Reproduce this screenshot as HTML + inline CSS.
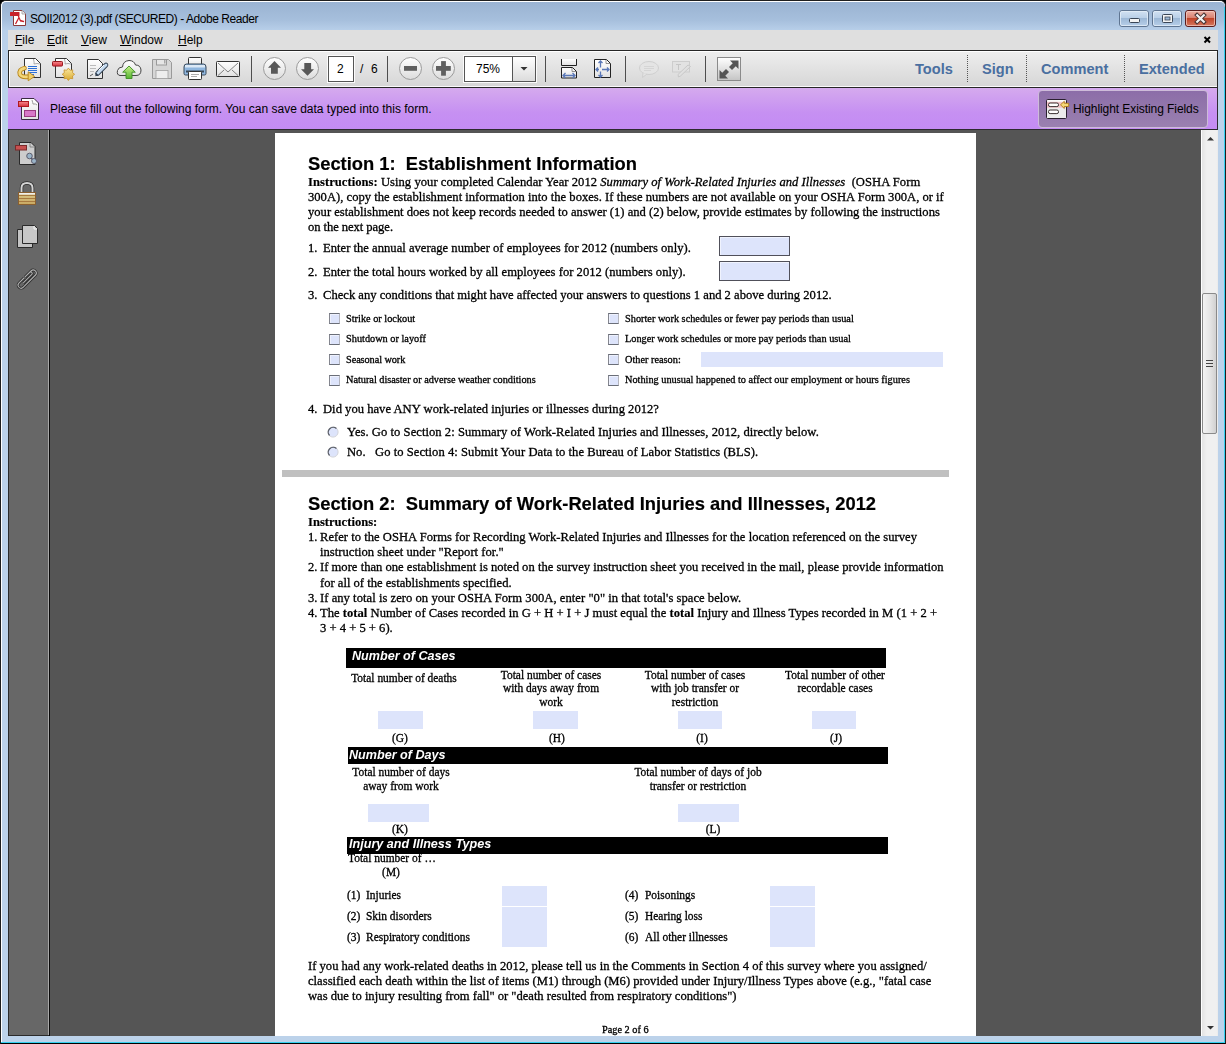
<!DOCTYPE html>
<html><head><meta charset="utf-8">
<style>
*{margin:0;padding:0;box-sizing:border-box}
html,body{width:1226px;height:1044px;overflow:hidden;background:#000}
body{position:relative;font-family:"Liberation Sans",sans-serif}
.a{position:absolute}
.u{position:absolute;white-space:pre;line-height:20px;font-size:12px;color:#000}
.u u{text-decoration:underline;text-underline-offset:1px}
.t{position:absolute;white-space:pre;line-height:20px;color:#000;-webkit-text-stroke:0.3px currentColor;will-change:transform}
.t b{-webkit-text-stroke:0.15px currentColor}
#frame{left:0;top:0;width:1226px;height:1044px;background:#bcd2ea;border:1px solid #1e1e1e;border-bottom-color:#000;border-radius:6px 6px 0 0}
#frameIn{left:1px;top:1px;width:1224px;height:1041px;border-left:1px solid #fff;border-top:1px solid #fff;border-radius:5px 5px 0 0;background:linear-gradient(#9ab3d2 0px,#a6bfdc 18px,#b9d0ea 29px,#bcd2ea 60px)}
#cyanB{left:1px;top:1042px;width:1224px;height:1px;background:#35d0f0}
#cyanR{left:1224px;top:7px;width:1px;height:1036px;background:#35d0f0}
#menubar{left:8px;top:30px;width:1210px;height:20px;background:#dfdfdf}
#toolbar{left:8px;top:50px;width:1210px;height:38px;background:linear-gradient(#eeeeee,#d6d6d6);border:1px solid #262626}
#toolbarIn{left:0;top:0;width:1208px;height:36px;border-top:1px solid #fff;border-bottom:1px solid #fafafa;border-left:1px solid #fff}
#purple{left:8px;top:88px;width:1210px;height:42px;background:linear-gradient(#d5aaee,#c690f2 60%,#c48cf4);border-bottom:1px solid #2d2a30;border-right:1px solid #2d2a30}
#leftpanel{left:8px;top:130px;width:42px;height:906px;background:#676767;border-left:1px solid #2b2b2b;border-bottom:1px solid #2b2b2b}
#lp1{left:48px;top:130px;width:1px;height:905px;background:#a8a8a8}
#lp2{left:49px;top:130px;width:1px;height:906px;background:#0a0a0a}
#docarea{left:50px;top:130px;width:1152px;height:906px;background:#555}
#scroll{left:1201px;top:130px;width:17px;height:906px;background:linear-gradient(90deg,#e4e4e4,#f0f0f0 30%,#f0f0f0 90%,#eaeaea);border-left:1px solid #fff}
#page{left:275px;top:133px;width:701px;height:903px;background:#fff}
.sep{position:absolute;top:56px;width:1px;height:26px;background:#4e4e4e}
.tb{position:absolute;font-weight:bold;font-size:14.6px;line-height:20px;color:#4a6fa0;top:58.7px;white-space:pre}
.dsep{position:absolute;top:55px;height:27px;width:1px;background:repeating-linear-gradient(#555 0 1px,transparent 1px 2px)}
</style></head><body>
<div id="frame" class="a"></div>
<div id="frameIn" class="a"></div>
<div id="cyanB" class="a"></div>
<div id="cyanR" class="a"></div>
<div id="menubar" class="a"></div>
<div id="toolbar" class="a"><div id="toolbarIn" class="a"></div></div>
<div class="sep" style="left:251px"></div>
<div class="sep" style="left:387px"></div>
<div class="sep" style="left:545px"></div>
<div class="sep" style="left:625px"></div>
<div class="sep" style="left:705px"></div>
<div class="dsep" style="left:967px"></div>
<div class="dsep" style="left:1026px"></div>
<div class="dsep" style="left:1124px"></div>
<div id="purple" class="a"></div>
<div class="a" style="left:1038px;top:90px;width:170px;height:38px;border-radius:4px;background:linear-gradient(#8c6ea8,#9a80b0);border:1px solid #cdbbd9"></div>
<div id="docarea" class="a"></div>
<div id="leftpanel" class="a"></div>
<div id="lp1" class="a"></div>
<div id="lp2" class="a"></div>
<div id="scroll" class="a"></div>
<svg class="a" style="left:0;top:0" width="1226" height="1044" viewBox="0 0 1226 1044">
<defs>
 <linearGradient id="gDoc" x1="0" y1="0" x2="0" y2="1"><stop offset="0" stop-color="#ffffff"/><stop offset="1" stop-color="#e2e2e2"/></linearGradient>
 <linearGradient id="gGold" x1="0" y1="0" x2="0" y2="1"><stop offset="0" stop-color="#fbe9a0"/><stop offset="1" stop-color="#d9a92e"/></linearGradient>
 <linearGradient id="gCirc" x1="0" y1="0" x2="0" y2="1"><stop offset="0" stop-color="#ffffff"/><stop offset="1" stop-color="#dcdcdc"/></linearGradient>
 <linearGradient id="gGreen" x1="0" y1="0" x2="0" y2="1"><stop offset="0" stop-color="#c7f08a"/><stop offset="1" stop-color="#56b431"/></linearGradient>
 <linearGradient id="gRed" x1="0" y1="0" x2="0" y2="1"><stop offset="0" stop-color="#f58a8f"/><stop offset="1" stop-color="#d7313a"/></linearGradient>
 <linearGradient id="gBlueBtn" x1="0" y1="0" x2="0" y2="1"><stop offset="0" stop-color="#d3e2f2"/><stop offset="0.45" stop-color="#bad0e8"/><stop offset="0.5" stop-color="#9db8d6"/><stop offset="1" stop-color="#b8d0ea"/></linearGradient>
 <linearGradient id="gCloseBtn" x1="0" y1="0" x2="0" y2="1"><stop offset="0" stop-color="#eeb3a8"/><stop offset="0.45" stop-color="#d98272"/><stop offset="0.5" stop-color="#c0442a"/><stop offset="1" stop-color="#d77b62"/></linearGradient>
 <linearGradient id="gFS" x1="0" y1="0" x2="0" y2="1"><stop offset="0" stop-color="#ffffff"/><stop offset="1" stop-color="#c4c4c4"/></linearGradient>
 <linearGradient id="gThumb" x1="0" y1="0" x2="1" y2="0"><stop offset="0" stop-color="#f4f4f4"/><stop offset="0.5" stop-color="#e6e6e6"/><stop offset="1" stop-color="#cfcfcf"/></linearGradient>
 <linearGradient id="gLock" x1="0" y1="0" x2="0" y2="1"><stop offset="0" stop-color="#d9c88a"/><stop offset="1" stop-color="#c9a862"/></linearGradient>
</defs>
<!-- title icon -->
<path d="M13.5 10.5 H22 L25.5 14 V25.5 H13.5 Z" fill="#fff" stroke="#8a3a3a" stroke-width="1"/>
<path d="M22 10.5 V14 H25.5" fill="#eee" stroke="#999" stroke-width="0.8"/>
<rect x="10" y="12" width="9.5" height="4" fill="#c8202a" rx="0.5"/>
<path d="M15.5 24 L19 17.5 L20.5 21 L24 21.5 L19.5 20 M19 17.5 L18 15" fill="none" stroke="#c8202a" stroke-width="1.3"/>
<!-- window buttons -->
<rect x="1119.5" y="10.5" width="29" height="16" rx="2.5" fill="url(#gBlueBtn)" stroke="#5f7591" stroke-width="1"/>
<rect x="1120.5" y="11.5" width="27" height="14" rx="1.5" fill="none" stroke="#e4eef8" stroke-opacity="0.8" stroke-width="1"/>
<rect x="1129.5" y="18.5" width="10" height="4" rx="1" fill="#f4f4f4" stroke="#3a4656" stroke-width="1"/>
<rect x="1152.5" y="10.5" width="29" height="16" rx="2.5" fill="url(#gBlueBtn)" stroke="#5f7591" stroke-width="1"/>
<rect x="1153.5" y="11.5" width="27" height="14" rx="1.5" fill="none" stroke="#e4eef8" stroke-opacity="0.8" stroke-width="1"/>
<rect x="1162.5" y="14.5" width="10" height="8" rx="1" fill="#f4f4f4" stroke="#3a4656" stroke-width="1"/>
<rect x="1165" y="17" width="5" height="3" fill="#9db8d6" stroke="#3a4656" stroke-width="0.8"/>
<rect x="1185.5" y="10.5" width="30" height="16" rx="2.5" fill="url(#gCloseBtn)" stroke="#5a1c1c" stroke-width="1"/>
<rect x="1186.5" y="11.5" width="28" height="14" rx="1.5" fill="none" stroke="#f6d0c8" stroke-opacity="0.7" stroke-width="1"/>
<path d="M1197 15 L1204 22 M1204 15 L1197 22" stroke="#4a3434" stroke-width="4" stroke-linecap="square"/>
<path d="M1197.2 15.2 L1203.8 21.8 M1203.8 15.2 L1197.2 21.8" stroke="#f2f2f2" stroke-width="2.2" stroke-linecap="square"/>
<!-- menu close -->
<path d="M1204.5 37 L1210 42.5 M1210 37 L1204.5 42.5" stroke="#000" stroke-width="2"/>
<!-- toolbar icon 1: create -->
<path d="M24.5 58.5 H35.5 L40.5 63.5 V77.5 H24.5 Z" fill="url(#gDoc)" stroke="#333" stroke-width="1"/>
<path d="M33.5 59 Q34.5 63 34 64 Q37 63 40 64" fill="none" stroke="#999" stroke-width="0.8"/>
<g stroke="#2a6fd6" stroke-width="1"><path d="M28 66.5 H37"/><path d="M28 68.5 H37"/><path d="M28 70.5 H37"/><path d="M28 72.5 H37"/><path d="M30 74.5 H34"/></g>
<path d="M24.5 68.2 Q18.5 69.5 20 74.5 Q21.5 77.6 29 76.6" fill="none" stroke="#b8861c" stroke-width="4.6" stroke-linecap="round"/>
<path d="M24.5 68.2 Q18.5 69.5 20 74.5 Q21.5 77.6 29 76.6" fill="none" stroke="#f3d77a" stroke-width="2.8" stroke-linecap="round"/>
<path d="M28.2 71.8 L34.6 76.4 L28.2 80.8 Z" fill="#f0cf6a" stroke="#b8861c" stroke-width="0.9" stroke-linejoin="round"/>
<!-- toolbar icon 2: forms -->
<path d="M55.5 58.5 H66.5 L71.5 63.5 V77.5 H55.5 Z" fill="url(#gDoc)" stroke="#333" stroke-width="1"/>
<path d="M64.5 59 Q65.5 63 65 64 Q68 63 71 64" fill="none" stroke="#999" stroke-width="0.8"/>
<rect x="52.5" y="61.5" width="10" height="4.6" rx="0.8" fill="url(#gRed)" stroke="#9a1a20" stroke-width="1"/>
<path d="M68.40 68.10 L70.08 70.23 L72.78 69.92 L72.47 72.62 L74.60 74.30 L72.47 75.98 L72.78 78.68 L70.08 78.37 L68.40 80.50 L66.72 78.37 L64.02 78.68 L64.33 75.98 L62.20 74.30 L64.33 72.62 L64.02 69.92 L66.72 70.23 Z" fill="url(#gGold)" stroke="#c8932a" stroke-width="0.8" stroke-linejoin="round"/>
<!-- icon 3: sign doc -->
<path d="M87.5 59.5 H98.5 L102.5 63.5 V78.5 H87.5 Z" fill="url(#gDoc)" stroke="#333" stroke-width="1"/>
<g stroke="#bbb" stroke-width="1"><path d="M90 65.5 H96"/><path d="M90 68.5 H96"/><path d="M90 71.5 H94"/></g>
<path d="M90 76 L93 74" stroke="#333" stroke-width="0.8"/>
<path d="M97.5 73.5 L106 65" stroke="#2e3e50" stroke-width="4.6" stroke-linecap="round"/>
<path d="M97.5 73.5 L106 65" stroke="#c4daf0" stroke-width="2.8" stroke-linecap="round"/>
<path d="M98.5 70.5 L104 65" stroke="#fff" stroke-width="1"/>
<path d="M95.2 76.2 L96.2 72.8 L98.6 75.2 Z" fill="#2e3e50"/>
<!-- icon 4: cloud -->
<path d="M120 75.5 Q116.5 75 117.5 70.5 Q118.5 67 122.5 67 Q123 61 129 60.5 Q134 60.5 135.5 65 Q140.5 65 141 70 Q141 75.5 136 75.5 Z" fill="url(#gDoc)" stroke="#444" stroke-width="1"/>
<path d="M129 66 L135.3 72.2 H132 V78.5 H126 V72.2 H122.7 Z" fill="url(#gGreen)" stroke="#3d8f24" stroke-width="0.9"/>
<!-- icon 5: save disabled -->
<path d="M152.5 59.5 H168.5 L171.5 62.5 V78.5 H152.5 Z" fill="#d6d6d6" stroke="#9a9a9a" stroke-width="1"/>
<rect x="156.5" y="59.5" width="10" height="5.5" fill="#e6e6e6" stroke="#9a9a9a" stroke-width="1"/>
<rect x="164" y="60" width="1.5" height="3.5" fill="#a8a8a8"/>
<rect x="156" y="70.5" width="12" height="8" fill="#ededed" stroke="#a0a0a0" stroke-width="0.8"/>
<!-- icon 6: printer -->
<rect x="188.5" y="57.5" width="13" height="9" rx="1" fill="url(#gDoc)" stroke="#333" stroke-width="1"/>
<path d="M186.5 64 H203.5 Q206 64 206 67 V73.5 Q206 75 204.5 75 H185.5 Q184 75 184 73.5 V67 Q184 64 186.5 64 Z" fill="#8fb6de" stroke="#3a4a5a" stroke-width="1"/>
<rect x="185" y="65" width="20" height="2.5" fill="#dbe8f5"/>
<rect x="186" y="70.5" width="18" height="2" fill="#38495a"/>
<rect x="188.5" y="71.5" width="13" height="8" rx="0.8" fill="#fff" stroke="#333" stroke-width="1"/>
<g stroke="#999" stroke-width="0.8"><path d="M191 74.5 H199"/><path d="M191 76.5 H197"/></g>
<!-- icon 7: envelope -->
<rect x="216.5" y="61.5" width="23" height="15" rx="0.8" fill="url(#gDoc)" stroke="#333" stroke-width="1"/>
<path d="M218 63 L228 72 L238 63 M218 75.5 L224 70 M238 75.5 L232 70" fill="none" stroke="#666" stroke-width="0.8"/>
<!-- nav circles -->
<circle cx="274.5" cy="68.5" r="11" fill="url(#gCirc)" stroke="#9a9a9a" stroke-width="1"/>
<path d="M274.5 61 L281 67.8 H277.8 V73.8 H271 V67.8 H268 Z" fill="#585858"/>
<circle cx="307.5" cy="68.5" r="11" fill="url(#gCirc)" stroke="#9a9a9a" stroke-width="1"/>
<path d="M304.3 63 H311.1 V69.2 H314 L307.5 75.8 L301 69.2 H304.3 Z" fill="#585858"/>
<!-- page box -->
<rect x="327.5" y="55.5" width="27" height="27" fill="#fff" stroke="#fbfbfb" stroke-width="1"/>
<rect x="328.5" y="56.5" width="25" height="25" fill="#fff" stroke="#555" stroke-width="1"/>
<!-- zoom circles -->
<circle cx="410.5" cy="68.5" r="11" fill="url(#gCirc)" stroke="#9a9a9a" stroke-width="1"/>
<rect x="404" y="66" width="13" height="4.8" fill="#606060"/>
<circle cx="443.5" cy="68.5" r="11" fill="url(#gCirc)" stroke="#9a9a9a" stroke-width="1"/>
<rect x="436" y="66" width="14.8" height="4.8" fill="#606060"/>
<rect x="441.1" y="61.1" width="4.8" height="14.6" fill="#606060"/>
<!-- zoom box -->
<rect x="463.5" y="55.5" width="73" height="27" fill="none" stroke="#fbfbfb" stroke-width="1"/>
<rect x="464.5" y="56.5" width="71" height="25" fill="#fff" stroke="#555" stroke-width="1"/>
<rect x="513" y="57" width="22" height="24" fill="url(#gCirc)"/>
<path d="M512.5 57 V81" stroke="#555" stroke-width="1"/>
<path d="M520.5 67 H527.5 L524 70.5 Z" fill="#333"/>
<!-- fit width -->
<path d="M561.5 59 V65.5 H576.5 V59" fill="url(#gDoc)" stroke="#222" stroke-width="1"/>
<path d="M561.5 67.5 H572.5 L576.5 71.5 V78 H561.5 Z" fill="url(#gDoc)" stroke="#222" stroke-width="1"/>
<path d="M572 68 V71.5 H576" fill="none" stroke="#777" stroke-width="0.8"/>
<path d="M563 75.5 H575 M565.5 73 L563 75.5 L565.5 78 M572.5 73 L575 75.5 L572.5 78" fill="none" stroke="#5a78b8" stroke-width="1.3"/>
<!-- fit page -->
<path d="M594.5 59.5 H606.5 L610.5 63.5 V77.5 H594.5 Z" fill="url(#gDoc)" stroke="#222" stroke-width="1"/>
<path d="M606 60 V63.5 H610" fill="none" stroke="#777" stroke-width="0.8"/>
<path d="M600.5 61 V67.5 M600.5 71.5 V77 M596 69.5 H599 M602 69.5 H609 M598.5 63 L600.5 61 L602.5 63 M598.5 75 L600.5 77 L602.5 75 M598 67.5 L596 69.5 L598 71.5 M607 67.5 L609 69.5 L607 71.5" fill="none" stroke="#5a78b8" stroke-width="1.3"/>
<!-- comment disabled -->
<ellipse cx="649" cy="68" rx="9.5" ry="6.5" fill="#e4e4e4" stroke="#cfcfcf" stroke-width="1"/>
<path d="M643 73 L642.5 77.5 L647 74" fill="#e4e4e4" stroke="#cfcfcf" stroke-width="1"/>
<g stroke="#d0d0d0" stroke-width="0.8"><path d="M644 66.5 H654"/><path d="M644 68.5 H654"/><path d="M644 70.5 H651"/></g>
<!-- text edit disabled -->
<rect x="672.5" y="61.5" width="17" height="10.5" fill="#e2e2e2" stroke="#cdcdcd" stroke-width="1"/>
<path d="M676 64.5 H681 M678.5 64.5 V70" stroke="#c6c6c6" stroke-width="1"/>
<path d="M678.5 77 L678 74.5 L688 65 L690.5 66.5 L680.5 76 Z" fill="#e0e0e0" stroke="#c8c8c8" stroke-width="1"/>
<!-- fullscreen -->
<rect x="717.5" y="57.5" width="23" height="23" fill="url(#gFS)" stroke="#8a8a8a" stroke-width="1"/>
<path d="M738.5 60.5 H730 L738.5 69 Z" fill="#555"/><path d="M735 64 L730.5 68.5" stroke="#555" stroke-width="4.2"/>
<path d="M719.5 78.5 H728 L719.5 70 Z" fill="#555"/><path d="M723 75 L727.5 70.5" stroke="#555" stroke-width="4.2"/>
<!-- purple bar icon -->
<path d="M21.5 98.5 H34 L38.5 103 V119.5 H21.5 Z" fill="url(#gDoc)" stroke="#3a2a40" stroke-width="1" stroke-linejoin="round"/>
<path d="M32 100 Q33 103.5 33 104 Q36 103.5 37 105" fill="none" stroke="#888" stroke-width="0.8"/>
<rect x="18.5" y="101.5" width="10" height="5" fill="url(#gRed)" stroke="#b01820" stroke-width="1"/>
<rect x="24.5" y="110.5" width="11" height="6" fill="#d878c8" stroke="#9a3a80" stroke-width="1"/>
<!-- highlight button icon -->
<rect x="1046.5" y="99.5" width="20" height="19" rx="1.2" fill="#fafafa" stroke="#2a2030" stroke-width="1"/>
<rect x="1047" y="101.8" width="19" height="6" fill="#f2c4c8"/>
<rect x="1047" y="108" width="19" height="10" fill="#ececec"/>
<rect x="1048.5" y="103" width="10" height="3.6" rx="1.6" fill="#fff" stroke="#3a3030" stroke-width="1"/>
<rect x="1048.5" y="110" width="10" height="3.6" rx="1.6" fill="#fff" stroke="#3a3030" stroke-width="1"/>
<path d="M1060.5 104.8 L1064.3 101.3 V103.3 H1068.7 V106.5 H1064.3 V108.5 Z" fill="#f6d878" stroke="#b07a18" stroke-width="0.9" stroke-linejoin="round"/>
<!-- left nav icons -->
<path d="M19.5 142.5 H31 L35 146.5 V164.5 H19.5 Z" fill="#cdcdcd" stroke="#2a2a2a" stroke-width="1"/>
<path d="M30 143 V147 H34.5" fill="none" stroke="#777" stroke-width="0.8"/>
<rect x="15.5" y="145.5" width="11" height="4.5" fill="#c85050" stroke="#7a2a2a" stroke-width="1"/>
<circle cx="29.5" cy="156" r="2.8" fill="#9ab4c8" stroke="#556" stroke-width="0.9"/>
<path d="M31 158 L33.5 160.5" stroke="#556" stroke-width="1.6"/>
<circle cx="34" cy="161" r="2.5" fill="#9ab4c8" stroke="#556" stroke-width="0.9"/>
<path d="M21.5 192.5 V188 Q21.5 183 27 183 Q32.5 183 32.5 188 V192.5" fill="none" stroke="#2a2a2a" stroke-width="3.4"/>
<path d="M21.5 192.5 V188 Q21.5 183 27 183 Q32.5 183 32.5 188 V192.5" fill="none" stroke="#d4d4d4" stroke-width="2"/>
<rect x="18.5" y="192.5" width="17" height="12" fill="url(#gLock)" stroke="#8a6030" stroke-width="1"/>
<g stroke="#a87a40" stroke-width="1"><path d="M19 195.5 H35"/><path d="M19 198.5 H35"/><path d="M19 201.5 H35"/></g>
<rect x="19" y="193" width="16" height="1.5" fill="#eee"/>
<path d="M17.5 229.5 H32.5 V247.5 H17.5 Z" fill="#c4c4c4" stroke="#2a2a2a" stroke-width="1"/>
<path d="M22.5 225.5 H34.5 L37.5 228.5 V243.5 H22.5 Z" fill="#c8c8c8" stroke="#2a2a2a" stroke-width="1"/>
<path d="M34 226 V229 H37" fill="none" stroke="#fff" stroke-width="0.8"/>
<g transform="translate(27.2 279.1) rotate(-45) scale(1.1 1.2)" fill="none">
<path d="M-1 -2.5 H-8 A2.5 2.5 0 0 0 -8 2.5 H8 A2.5 2.5 0 0 0 8 -2.5 H0 M-5 0 H6 A1.25 1.25 0 0 0 6 -2.5" stroke="#2e2e2e" stroke-width="2.4"/>
<path d="M-1 -2.5 H-8 A2.5 2.5 0 0 0 -8 2.5 H8 A2.5 2.5 0 0 0 8 -2.5 H0 M-5 0 H6 A1.25 1.25 0 0 0 6 -2.5" stroke="#b0b0b0" stroke-width="0.9"/>
</g>
<!-- scrollbar -->
<path d="M1207 140.5 L1210.5 137 L1214 140.5 Z" fill="#333"/>
<path d="M1207 1026 L1210.5 1029.5 L1214 1026 Z" fill="#333"/>
<rect x="1202.5" y="293.5" width="14" height="140" rx="1.5" fill="url(#gThumb)" stroke="#8a8a8a" stroke-width="1"/>
<g stroke="#444" stroke-width="1"><path d="M1206 360.5 H1213"/><path d="M1206 363.5 H1213"/><path d="M1206 366.5 H1213"/></g>
</svg>

<div class="u" style="left:30px;top:8.84px;letter-spacing:-0.44px">SOII2012 (3).pdf (SECURED) - Adobe Reader</div>
<div class="u" style="left:15px;top:29.84px"><u>F</u>ile</div>
<div class="u" style="left:47px;top:29.84px"><u>E</u>dit</div>
<div class="u" style="left:81px;top:29.84px"><u>V</u>iew</div>
<div class="u" style="left:120px;top:29.84px"><u>W</u>indow</div>
<div class="u" style="left:178px;top:29.84px"><u>H</u>elp</div>
<div class="u" style="left:337px;top:58.84px">2</div>
<div class="u" style="left:360px;top:58.84px">/</div>
<div class="u" style="left:371px;top:58.84px">6</div>
<div class="u" style="left:476px;top:58.84px">75%</div>
<div class="tb" style="left:915px">Tools</div>
<div class="tb" style="left:982px">Sign</div>
<div class="tb" style="left:1041px">Comment</div>
<div class="tb" style="left:1139px">Extended</div>
<div class="u" style="left:50px;top:98.84px">Please fill out the following form. You can save data typed into this form.</div>
<div class="u" style="left:1073px;top:98.84px;letter-spacing:-0.07px">Highlight Existing Fields</div>
<div id="page" class="a"></div>
<div id="e1" class="t" style="left:308.00px;top:153.65px;font-size:18.33px;font-family:'Liberation Sans',sans-serif;font-weight:bold;-webkit-text-stroke:0.2px">Section 1:  Establishment Information</div>
<div id="e2" class="t" style="left:308.00px;top:171.75px;font-size:12.6px;font-family:'Liberation Serif',serif;;letter-spacing:0.0360px"><b>Instructions:</b> Using your completed Calendar Year 2012 <i>Summary of Work-Related Injuries and Illnesses</i>  (OSHA Form</div>
<div id="e3" class="t" style="left:308.00px;top:186.75px;font-size:12.6px;font-family:'Liberation Serif',serif;;letter-spacing:0.0083px">300A), copy the establishment information into the boxes. If these numbers are not available on your OSHA Form 300A, or if</div>
<div id="e4" class="t" style="left:308.00px;top:201.75px;font-size:12.6px;font-family:'Liberation Serif',serif;">your establishment does not keep records needed to answer (1) and (2) below, provide estimates by following the instructions</div>
<div id="e5" class="t" style="left:308.00px;top:216.75px;font-size:12.6px;font-family:'Liberation Serif',serif;;letter-spacing:-0.0625px">on the next page.</div>
<div id="e6" class="t" style="left:308.00px;top:237.75px;font-size:12.6px;font-family:'Liberation Serif',serif;">1.</div>
<div id="e7" class="t" style="left:323.00px;top:237.75px;font-size:12.6px;font-family:'Liberation Serif',serif;;letter-spacing:0.0147px">Enter the annual average number of employees for 2012 (numbers only).</div>
<div id="e8" class="t" style="left:308.00px;top:261.75px;font-size:12.6px;font-family:'Liberation Serif',serif;">2.</div>
<div id="e9" class="t" style="left:323.00px;top:261.75px;font-size:12.6px;font-family:'Liberation Serif',serif;;letter-spacing:0.0145px">Enter the total hours worked by all employees for 2012 (numbers only).</div>
<div id="e10" class="t" style="left:308.00px;top:284.75px;font-size:12.6px;font-family:'Liberation Serif',serif;">3.</div>
<div id="e11" class="t" style="left:323.00px;top:284.75px;font-size:12.6px;font-family:'Liberation Serif',serif;">Check any conditions that might have affected your answers to questions 1 and 2 above during 2012.</div>
<div class="a" style="left:719px;top:236px;width:71px;height:20px;background:#dde4fb;border:1px solid #50505a;box-shadow:inset 1px 1px 0 #f0f3fe"></div>
<div class="a" style="left:719px;top:261px;width:71px;height:20px;background:#dde4fb;border:1px solid #50505a;box-shadow:inset 1px 1px 0 #f0f3fe"></div>
<div class="a" style="left:329px;top:313px;width:11px;height:11px;background:#dde4fb;border:1px solid #6a6e78;border-left-color:#84868f;border-right-color:#b4b5bd;box-shadow:inset 1px 1px 0 #eef1fd"></div>
<div class="a" style="left:608px;top:313px;width:11px;height:11px;background:#dde4fb;border:1px solid #6a6e78;border-left-color:#84868f;border-right-color:#b4b5bd;box-shadow:inset 1px 1px 0 #eef1fd"></div>
<div id="e12" class="t sm" style="left:346.00px;top:308.52px;font-size:10.3px;font-family:'Liberation Serif',serif;">Strike or lockout</div>
<div id="e13" class="t sm" style="left:625.00px;top:308.52px;font-size:10.3px;font-family:'Liberation Serif',serif;">Shorter work schedules or fewer pay periods than usual</div>
<div class="a" style="left:329px;top:334px;width:11px;height:11px;background:#dde4fb;border:1px solid #6a6e78;border-left-color:#84868f;border-right-color:#b4b5bd;box-shadow:inset 1px 1px 0 #eef1fd"></div>
<div class="a" style="left:608px;top:334px;width:11px;height:11px;background:#dde4fb;border:1px solid #6a6e78;border-left-color:#84868f;border-right-color:#b4b5bd;box-shadow:inset 1px 1px 0 #eef1fd"></div>
<div id="e14" class="t sm" style="left:346.00px;top:328.52px;font-size:10.3px;font-family:'Liberation Serif',serif;">Shutdown or layoff</div>
<div id="e15" class="t sm" style="left:625.00px;top:328.52px;font-size:10.3px;font-family:'Liberation Serif',serif;">Longer work schedules or more pay periods than usual</div>
<div class="a" style="left:329px;top:354px;width:11px;height:11px;background:#dde4fb;border:1px solid #6a6e78;border-left-color:#84868f;border-right-color:#b4b5bd;box-shadow:inset 1px 1px 0 #eef1fd"></div>
<div class="a" style="left:608px;top:354px;width:11px;height:11px;background:#dde4fb;border:1px solid #6a6e78;border-left-color:#84868f;border-right-color:#b4b5bd;box-shadow:inset 1px 1px 0 #eef1fd"></div>
<div id="e16" class="t sm" style="left:346.00px;top:349.52px;font-size:10.3px;font-family:'Liberation Serif',serif;;letter-spacing:-0.0833px">Seasonal work</div>
<div id="e17" class="t sm" style="left:625.00px;top:349.52px;font-size:10.3px;font-family:'Liberation Serif',serif;">Other reason:</div>
<div class="a" style="left:329px;top:375px;width:11px;height:11px;background:#dde4fb;border:1px solid #6a6e78;border-left-color:#84868f;border-right-color:#b4b5bd;box-shadow:inset 1px 1px 0 #eef1fd"></div>
<div class="a" style="left:608px;top:375px;width:11px;height:11px;background:#dde4fb;border:1px solid #6a6e78;border-left-color:#84868f;border-right-color:#b4b5bd;box-shadow:inset 1px 1px 0 #eef1fd"></div>
<div id="e18" class="t sm" style="left:346.00px;top:369.52px;font-size:10.3px;font-family:'Liberation Serif',serif;;letter-spacing:-0.0222px">Natural disaster or adverse weather conditions</div>
<div id="e19" class="t sm" style="left:625.00px;top:369.52px;font-size:10.3px;font-family:'Liberation Serif',serif;">Nothing unusual happened to affect our employment or hours figures</div>
<div class="a" style="left:701px;top:352px;width:242px;height:15px;background:#dde4fb"></div>
<div id="e20" class="t" style="left:308.00px;top:398.75px;font-size:12.6px;font-family:'Liberation Serif',serif;">4.</div>
<div id="e21" class="t" style="left:323.00px;top:398.75px;font-size:12.6px;font-family:'Liberation Serif',serif;;letter-spacing:0.0159px">Did you have ANY work-related injuries or illnesses during 2012?</div>
<svg class="a" style="left:324.8px;top:423.7px" width="16" height="16"><circle cx="8" cy="8" r="5.1" fill="#dde4fb" stroke="#d4d5da" stroke-width="1"/><path d="M11.46 4.54 A4.9 4.9 0 0 0 4.54 11.46" fill="none" stroke="#5a5e68" stroke-width="1.3"/></svg>
<svg class="a" style="left:324.8px;top:444.3px" width="16" height="16"><circle cx="8" cy="8" r="5.1" fill="#dde4fb" stroke="#d4d5da" stroke-width="1"/><path d="M11.46 4.54 A4.9 4.9 0 0 0 4.54 11.46" fill="none" stroke="#5a5e68" stroke-width="1.3"/></svg>
<div id="e22" class="t" style="left:347.00px;top:421.75px;font-size:12.6px;font-family:'Liberation Serif',serif;;letter-spacing:0.0444px">Yes. Go to Section 2: Summary of Work-Related Injuries and Illnesses, 2012, directly below.</div>
<div id="e23" class="t" style="left:347.00px;top:441.75px;font-size:12.6px;font-family:'Liberation Serif',serif;">No.</div>
<div id="e24" class="t" style="left:375.00px;top:441.75px;font-size:12.6px;font-family:'Liberation Serif',serif;;letter-spacing:0.0411px">Go to Section 4: Submit Your Data to the Bureau of Labor Statistics (BLS).</div>
<div class="a" style="left:282px;top:470px;width:667px;height:7px;background:#c0c0c0"></div>
<div id="e25" class="t" style="left:308.00px;top:493.65px;font-size:18.33px;font-family:'Liberation Sans',sans-serif;font-weight:bold;-webkit-text-stroke:0.2px">Section 2:  Summary of Work-Related Injuries and Illnesses, 2012</div>
<div id="e26" class="t" style="left:308.00px;top:511.75px;font-size:12.6px;font-family:'Liberation Serif',serif;"><b>Instructions:</b></div>
<div id="e27" class="t" style="left:308.00px;top:526.75px;font-size:12.6px;font-family:'Liberation Serif',serif;">1.</div>
<div id="e28" class="t" style="left:320.00px;top:526.75px;font-size:12.6px;font-family:'Liberation Serif',serif;;letter-spacing:0.0175px">Refer to the OSHA Forms for Recording Work-Related Injuries and Illnesses for the location referenced on the survey</div>
<div id="e29" class="t" style="left:320.00px;top:541.75px;font-size:12.6px;font-family:'Liberation Serif',serif;;letter-spacing:0.0278px">instruction sheet under "Report for."</div>
<div id="e30" class="t" style="left:308.00px;top:556.75px;font-size:12.6px;font-family:'Liberation Serif',serif;">2.</div>
<div id="e31" class="t" style="left:320.00px;top:556.75px;font-size:12.6px;font-family:'Liberation Serif',serif;;letter-spacing:0.0081px">If more than one establishment is noted on the survey instruction sheet you received in the mail, please provide information</div>
<div id="e32" class="t" style="left:320.00px;top:572.75px;font-size:12.6px;font-family:'Liberation Serif',serif;">for all of the establishments specified.</div>
<div id="e33" class="t" style="left:308.00px;top:587.75px;font-size:12.6px;font-family:'Liberation Serif',serif;">3.</div>
<div id="e34" class="t" style="left:320.00px;top:587.75px;font-size:12.6px;font-family:'Liberation Serif',serif;;letter-spacing:0.0366px">If any total is zero on your OSHA Form 300A, enter "0" in that total's space below.</div>
<div id="e35" class="t" style="left:308.00px;top:602.75px;font-size:12.6px;font-family:'Liberation Serif',serif;">4.</div>
<div id="e36" class="t" style="left:320.00px;top:602.75px;font-size:12.6px;font-family:'Liberation Serif',serif;;letter-spacing:0.0168px">The <b>total</b> Number of Cases recorded in G + H + I + J must equal the <b>total</b> Injury and Illness Types recorded in M (1 + 2 +</div>
<div id="e37" class="t" style="left:320.00px;top:617.75px;font-size:12.6px;font-family:'Liberation Serif',serif;">3 + 4 + 5 + 6).</div>
<div class="a" style="left:346px;top:648px;width:540px;height:20px;background:#000"></div>
<div id="e38" class="t" style="left:352.00px;top:645.63px;font-size:12.6px;font-family:'Liberation Sans',sans-serif;font-weight:bold;font-style:italic;color:#fff;-webkit-text-stroke:0">Number of Cases</div>
<div id="e39" class="t" style="left:104.00px;width:600px;text-align:center;top:668.14px;font-size:11.45px;font-family:'Liberation Serif',serif;">Total number of deaths</div>
<div id="e40" class="t" style="left:251.00px;width:600px;text-align:center;top:664.64px;font-size:11.45px;font-family:'Liberation Serif',serif;">Total number of cases</div>
<div id="e41" class="t" style="left:251.00px;width:600px;text-align:center;top:678.14px;font-size:11.45px;font-family:'Liberation Serif',serif;">with days away from</div>
<div id="e42" class="t" style="left:251.00px;width:600px;text-align:center;top:691.64px;font-size:11.45px;font-family:'Liberation Serif',serif;">work</div>
<div id="e43" class="t" style="left:395.30px;width:600px;text-align:center;top:664.64px;font-size:11.45px;font-family:'Liberation Serif',serif;">Total number of cases</div>
<div id="e44" class="t" style="left:395.30px;width:600px;text-align:center;top:678.14px;font-size:11.45px;font-family:'Liberation Serif',serif;">with job transfer or</div>
<div id="e45" class="t" style="left:395.30px;width:600px;text-align:center;top:691.64px;font-size:11.45px;font-family:'Liberation Serif',serif;">restriction</div>
<div id="e46" class="t" style="left:534.50px;width:600px;text-align:center;top:664.64px;font-size:11.45px;font-family:'Liberation Serif',serif;">Total number of other</div>
<div id="e47" class="t" style="left:534.50px;width:600px;text-align:center;top:678.14px;font-size:11.45px;font-family:'Liberation Serif',serif;">recordable cases</div>
<div class="a" style="left:378px;top:711px;width:45px;height:18px;background:#dde4fb"></div>
<div class="a" style="left:533px;top:711px;width:45px;height:18px;background:#dde4fb"></div>
<div class="a" style="left:678px;top:711px;width:44px;height:18px;background:#dde4fb"></div>
<div class="a" style="left:812px;top:711px;width:44px;height:18px;background:#dde4fb"></div>
<div id="e48" class="t" style="left:100.30px;width:600px;text-align:center;top:728.14px;font-size:11.45px;font-family:'Liberation Serif',serif;">(G)</div>
<div id="e49" class="t" style="left:256.50px;width:600px;text-align:center;top:728.14px;font-size:11.45px;font-family:'Liberation Serif',serif;">(H)</div>
<div id="e50" class="t" style="left:402.00px;width:600px;text-align:center;top:728.14px;font-size:11.45px;font-family:'Liberation Serif',serif;">(I)</div>
<div id="e51" class="t" style="left:536.30px;width:600px;text-align:center;top:728.14px;font-size:11.45px;font-family:'Liberation Serif',serif;">(J)</div>
<div class="a" style="left:348px;top:747px;width:540px;height:17px;background:#000"></div>
<div id="e52" class="t" style="left:349.00px;top:744.63px;font-size:12.6px;font-family:'Liberation Sans',sans-serif;font-weight:bold;font-style:italic;color:#fff;-webkit-text-stroke:0">Number of Days</div>
<div id="e53" class="t" style="left:101.00px;width:600px;text-align:center;top:762.14px;font-size:11.45px;font-family:'Liberation Serif',serif;">Total number of days</div>
<div id="e54" class="t" style="left:101.00px;width:600px;text-align:center;top:776.14px;font-size:11.45px;font-family:'Liberation Serif',serif;">away from work</div>
<div id="e55" class="t" style="left:398.40px;width:600px;text-align:center;top:762.14px;font-size:11.45px;font-family:'Liberation Serif',serif;">Total number of days of job</div>
<div id="e56" class="t" style="left:398.40px;width:600px;text-align:center;top:776.14px;font-size:11.45px;font-family:'Liberation Serif',serif;">transfer or restriction</div>
<div class="a" style="left:368px;top:804px;width:61px;height:18px;background:#dde4fb"></div>
<div class="a" style="left:678px;top:804px;width:61px;height:18px;background:#dde4fb"></div>
<div id="e57" class="t" style="left:99.50px;width:600px;text-align:center;top:819.14px;font-size:11.45px;font-family:'Liberation Serif',serif;">(K)</div>
<div id="e58" class="t" style="left:412.50px;width:600px;text-align:center;top:819.14px;font-size:11.45px;font-family:'Liberation Serif',serif;">(L)</div>
<div class="a" style="left:347px;top:837px;width:541px;height:17px;background:#000"></div>
<div id="e59" class="t" style="left:348.50px;top:833.63px;font-size:12.6px;font-family:'Liberation Sans',sans-serif;font-weight:bold;font-style:italic;color:#fff;-webkit-text-stroke:0">Injury and Illness Types</div>
<div id="e60" class="t" style="left:348.20px;top:848.14px;font-size:11.45px;font-family:'Liberation Serif',serif;">Total number of …</div>
<div id="e61" class="t" style="left:91.40px;width:600px;text-align:center;top:862.14px;font-size:11.45px;font-family:'Liberation Serif',serif;">(M)</div>
<div id="e62" class="t" style="left:346.50px;top:885.14px;font-size:11.45px;font-family:'Liberation Serif',serif;">(1)</div>
<div id="e63" class="t" style="left:365.80px;top:885.14px;font-size:11.45px;font-family:'Liberation Serif',serif;">Injuries</div>
<div id="e64" class="t" style="left:346.50px;top:906.14px;font-size:11.45px;font-family:'Liberation Serif',serif;">(2)</div>
<div id="e65" class="t" style="left:365.80px;top:906.14px;font-size:11.45px;font-family:'Liberation Serif',serif;">Skin disorders</div>
<div id="e66" class="t" style="left:346.50px;top:927.14px;font-size:11.45px;font-family:'Liberation Serif',serif;">(3)</div>
<div id="e67" class="t" style="left:365.80px;top:927.14px;font-size:11.45px;font-family:'Liberation Serif',serif;">Respiratory conditions</div>
<div id="e68" class="t" style="left:625.30px;top:885.14px;font-size:11.45px;font-family:'Liberation Serif',serif;">(4)</div>
<div id="e69" class="t" style="left:645.00px;top:885.14px;font-size:11.45px;font-family:'Liberation Serif',serif;">Poisonings</div>
<div id="e70" class="t" style="left:625.30px;top:906.14px;font-size:11.45px;font-family:'Liberation Serif',serif;">(5)</div>
<div id="e71" class="t" style="left:645.00px;top:906.14px;font-size:11.45px;font-family:'Liberation Serif',serif;">Hearing loss</div>
<div id="e72" class="t" style="left:625.30px;top:927.14px;font-size:11.45px;font-family:'Liberation Serif',serif;">(6)</div>
<div id="e73" class="t" style="left:645.00px;top:927.14px;font-size:11.45px;font-family:'Liberation Serif',serif;">All other illnesses</div>
<div class="a" style="left:502px;top:886px;width:45px;height:20px;background:#dde4fb"></div>
<div class="a" style="left:502px;top:907px;width:45px;height:40px;background:#dde4fb"></div>
<div class="a" style="left:770px;top:886px;width:45px;height:20px;background:#dde4fb"></div>
<div class="a" style="left:770px;top:907px;width:45px;height:40px;background:#dde4fb"></div>
<div id="e74" class="t" style="left:308.00px;top:955.75px;font-size:12.6px;font-family:'Liberation Serif',serif;">If you had any work-related deaths in 2012, please tell us in the Comments in Section 4 of this survey where you assigned/</div>
<div id="e75" class="t" style="left:308.00px;top:970.75px;font-size:12.6px;font-family:'Liberation Serif',serif;;letter-spacing:0.0161px">classified each death within the list of items (M1) through (M6) provided under Injury/Illness Types above (e.g., "fatal case</div>
<div id="e76" class="t" style="left:308.00px;top:985.75px;font-size:12.6px;font-family:'Liberation Serif',serif;;letter-spacing:-0.0116px">was due to injury resulting from fall" or "death resulted from respiratory conditions")</div>
<div id="e77" class="t sm" style="left:602.00px;top:1019.52px;font-size:10.3px;font-family:'Liberation Serif',serif;">Page 2 of 6</div>
</body></html>
